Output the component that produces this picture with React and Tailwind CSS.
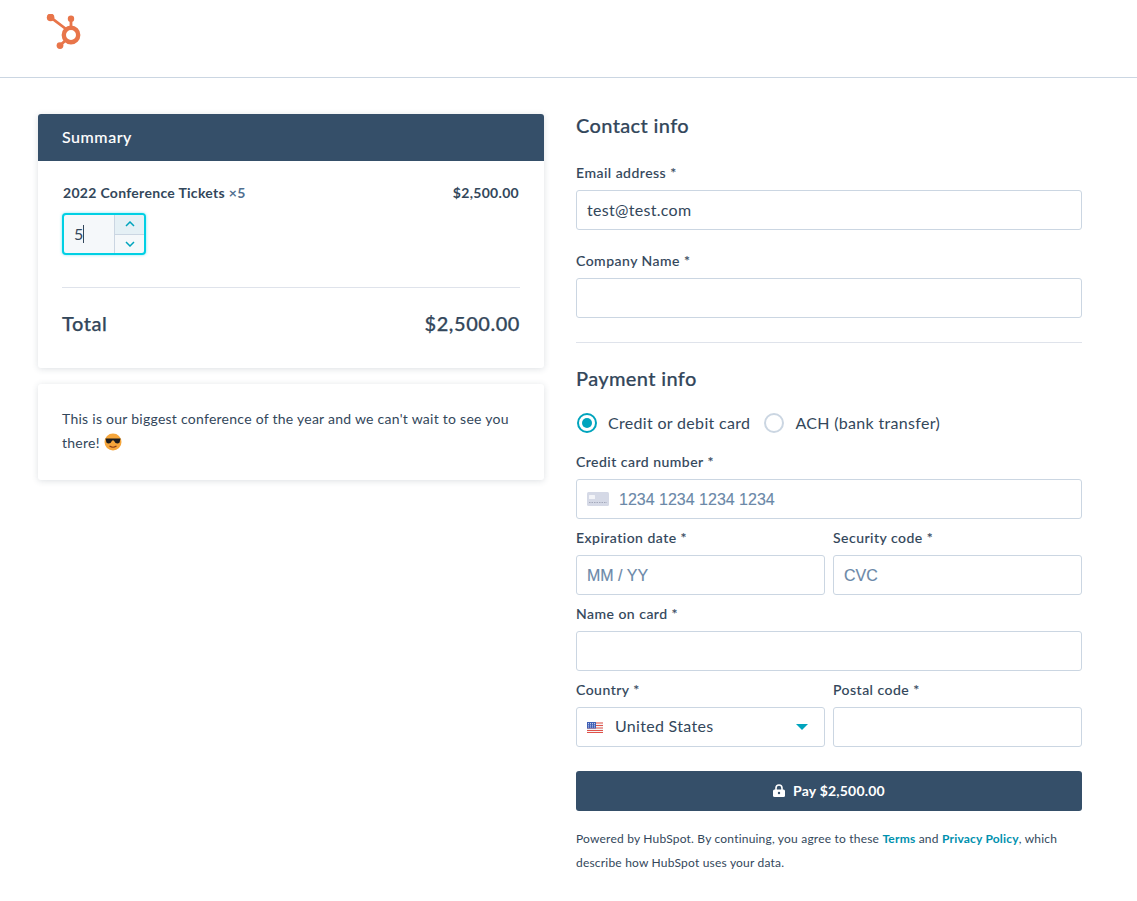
const labelClass =
  "block text-[14px] leading-[18px] font-medium tracking-[0.48px] [-webkit-text-stroke:0.1px] text-[#33475b] mb-[8px]";
const inputClass =
  "w-full h-[40px] px-[10px] border border-[#cbd6e2] rounded-[3px] bg-white text-[16px] tracking-[0.3px] text-[#33475b] flex items-center";
const headingClass = "text-[20px] leading-[22px] font-medium tracking-[0.36px] [-webkit-text-stroke:0.2px] text-[#33475b]";
const stripeClass = "pt-px text-[#6b88a8] tracking-normal [-webkit-text-stroke:0.15px] font-['Liberation_Sans',Arial,sans-serif]";

function HubSpotLogo() {
  return (
    <svg width="36" height="38" viewBox="0 0 36 38" fill="none">
      <circle cx="4.6" cy="3.4" r="3.8" fill="#e8754a" />
      <circle cx="25" cy="4.8" r="3.2" fill="#e8754a" />
      <circle cx="14" cy="31.6" r="3.4" fill="#e8754a" />
      <path d="M4.6 3.4 L20 15 M25 4.8 V13 M14 31.6 L20.5 25.5" stroke="#e8754a" strokeWidth="2.8" />
      <circle cx="25" cy="21" r="7.2" stroke="#e8754a" strokeWidth="4.4" />
    </svg>
  );
}

function CoolEmoji() {
  return (
    <svg width="18" height="18" viewBox="0 0 18 18" className="inline-block align-[-3px]">
      <circle cx="9" cy="9" r="8.5" fill="#f5a63c" />
      <path d="M1.5 5.5 H16.5 L15.6 9.5 Q14 11 11.5 10 L9.8 7.6 H8.2 L6.5 10 Q4 11 2.4 9.5 Z" fill="#1d1d1f" />
      <path d="M5.5 13 Q9 15.5 12.5 13" stroke="#8a3b12" strokeWidth="1.1" fill="none" />
    </svg>
  );
}

function CardIcon() {
  return (
    <svg width="22" height="14" viewBox="0 0 22 14">
      <rect width="22" height="14" rx="1.5" fill="#d5d9e6" />
      <rect x="2" y="3" width="6" height="4" rx="0.5" fill="#f3f4f8" />
      <path d="M2 10.5 H20" stroke="#a4a9bb" strokeWidth="1" strokeDasharray="1.5 1" />
    </svg>
  );
}

function UsFlag() {
  return (
    <svg width="16" height="11" viewBox="0 0 16 11">
      <rect width="16" height="11" fill="#f4f4f4" />
      <path d="M0 1 H16 M0 3.5 H16 M0 6 H16 M0 8.5 H16 M0 10.5 H16" stroke="#e0524a" strokeWidth="1" />
      <rect width="9" height="6.5" fill="#3f5fb5" />
      <path d="M1 1.5 H8 M1 3.2 H8 M1 5 H8" stroke="#dfe6f7" strokeWidth="0.8" strokeDasharray="1 1" />
    </svg>
  );
}

function Field({ label, children, className = "" }) {
  return (
    <div className={className}>
      <label className={labelClass}>{label}</label>
      {children}
    </div>
  );
}

function QuantityStepper() {
  return (
    <div className="mt-[11px] w-[84px] h-[42px] flex border-2 border-[#00d0e4] rounded-[4px] bg-[#f5f8fa] overflow-hidden shadow-[0_0_3px_rgba(0,208,228,0.5)]">
      <div className="flex-1 flex items-center pl-[10px] text-[16px] text-[#33475b]">
        5<span className="w-px h-[18px] bg-[#33475b]" />
      </div>
      <div className="w-[30px] flex flex-col border-l border-[#cbd6e2]">
        <div className="flex-1 flex items-center justify-center bg-[#e5f0f5] border-b border-[#cbd6e2]">
          <svg width="10" height="6" viewBox="0 0 10 6" fill="none">
            <path d="M1 5 L5 1 L9 5" stroke="#00a4bd" strokeWidth="1.5" />
          </svg>
        </div>
        <div className="flex-1 flex items-center justify-center">
          <svg width="10" height="6" viewBox="0 0 10 6" fill="none">
            <path d="M1 1 L5 5 L9 1" stroke="#00a4bd" strokeWidth="1.5" />
          </svg>
        </div>
      </div>
    </div>
  );
}

function Summary() {
  return (
    <section className="w-[506px] shrink-0">
      <div className="rounded-[3px] bg-white shadow-[0_1px_6px_rgba(45,62,80,0.16)]">
        <div className="h-[47px] px-[24px] pb-[2px] flex items-center bg-[#354f69] rounded-t-[3px] text-white text-[16px] font-medium tracking-[0.55px] [-webkit-text-stroke:0.1px]">
          Summary
        </div>
        <div className="px-[24px] pt-[23px] pb-[32px]">
          <div className="flex justify-between text-[14px] leading-[18px] font-bold tracking-[0.3px] text-[#33475b] pl-px">
            <span>
              2022 Conference Tickets <span className="text-[#516f90]">×5</span>
            </span>
            <span className="pr-px">$2,500.00</span>
          </div>
          <QuantityStepper />
          <div className="mt-[32px] border-t border-[#dfe3eb]" />
          <div className="mt-[22px] flex justify-between text-[20px] leading-[26px] font-medium tracking-[0.55px] [-webkit-text-stroke:0.25px] text-[#33475b]">
            <span>Total</span>
            <span>$2,500.00</span>
          </div>
        </div>
      </div>
      <div className="mt-[16px] h-[96px] px-[24px] pt-[23px] rounded-[3px] bg-white shadow-[0_1px_6px_rgba(45,62,80,0.16)] text-[14px] leading-[24px] tracking-[0.26px] text-[#33475b]">
        This is our biggest conference of the year and we can't wait to see you there! <CoolEmoji />
      </div>
    </section>
  );
}

function PaymentForm() {
  return (
    <section className="w-[506px] shrink-0 ml-[32px]">
      <h2 className={headingClass}>Contact info</h2>
      <Field label="Email address *" className="mt-[28px]">
        <div className={inputClass}>test@test.com</div>
      </Field>
      <Field label="Company Name *" className="mt-[22px]">
        <div className={inputClass} />
      </Field>
      <div className="mt-[24px] border-t border-[#dfe3eb]" />
      <h2 className={`mt-[24px] ${headingClass}`}>Payment info</h2>

      <div className="mt-[22px] h-[24px] flex items-center text-[16px] tracking-[0.32px] text-[#33475b]">
        <span className="w-[20px] h-[20px] ml-px rounded-full border-2 border-[#00a4bd] flex items-center justify-center">
          <span className="w-[10px] h-[10px] rounded-full bg-[#00a4bd]" />
        </span>
        <span className="ml-[11px]">Credit or debit card</span>
        <span className="ml-[14px] w-[20px] h-[20px] rounded-full border-2 border-[#cbd6e2]" />
        <span className="ml-[11px]">ACH (bank transfer)</span>
      </div>

      <Field label="Credit card number *" className="mt-[18px]">
        <div className={inputClass}>
          <CardIcon />
          <span className={`ml-[10px] ${stripeClass}`}>1234 1234 1234 1234</span>
        </div>
      </Field>
      <div className="mt-[10px] grid grid-cols-2 gap-x-[8px]">
        <Field label="Expiration date *">
          <div className={inputClass}>
            <span className={stripeClass}>MM / YY</span>
          </div>
        </Field>
        <Field label="Security code *">
          <div className={inputClass}>
            <span className={stripeClass}>CVC</span>
          </div>
        </Field>
      </div>
      <Field label="Name on card *" className="mt-[10px]">
        <div className={inputClass} />
      </Field>
      <div className="mt-[10px] grid grid-cols-2 gap-x-[8px]">
        <Field label="Country *">
          <div className={inputClass}>
            <UsFlag />
            <span className="ml-[12px] flex-1 pb-[2px]">United States</span>
            <span className="mr-[6px] w-0 h-0 border-x-[6px] border-x-transparent border-t-[6px] border-t-[#00a4bd]" />
          </div>
        </Field>
        <Field label="Postal code *">
          <div className={inputClass} />
        </Field>
      </div>

      <button className="mt-[24px] w-full h-[40px] pb-[2px] flex items-center justify-center gap-[8px] bg-[#354f69] rounded-[3px] text-white text-[14px] font-bold tracking-[0.2px]">
        <svg width="12" height="13" viewBox="0 0 12 13">
          <path d="M3 6 V4 a3 3 0 0 1 6 0 V6" stroke="#fff" strokeWidth="1.6" fill="none" />
          <rect y="5.5" width="12" height="7.5" rx="1.5" fill="#fff" />
          <circle cx="6" cy="9" r="1.2" fill="#354f69" />
        </svg>
        Pay $2,500.00
      </button>
      <p className="mt-[16px] text-[12px] leading-[24px] tracking-[0.2px] text-[#33475b]">
        Powered by HubSpot. By continuing, you agree to these{" "}
        <span className="font-bold text-[#0091ae]">Terms</span> and{" "}
        <span className="font-bold text-[#0091ae]">Privacy Policy</span>, which describe how HubSpot uses your data.
      </p>
    </section>
  );
}

export default function App() {
  return (
    <div className="min-h-[901px] bg-white font-['Lato',sans-serif]">
      <header className="h-[78px] border-b border-[#cbd6e2] pl-[46px] pt-[14px]">
        <HubSpotLogo />
      </header>
      <main className="flex pl-[38px] pt-[36px]">
        <Summary />
        <PaymentForm />
      </main>
    </div>
  );
}
